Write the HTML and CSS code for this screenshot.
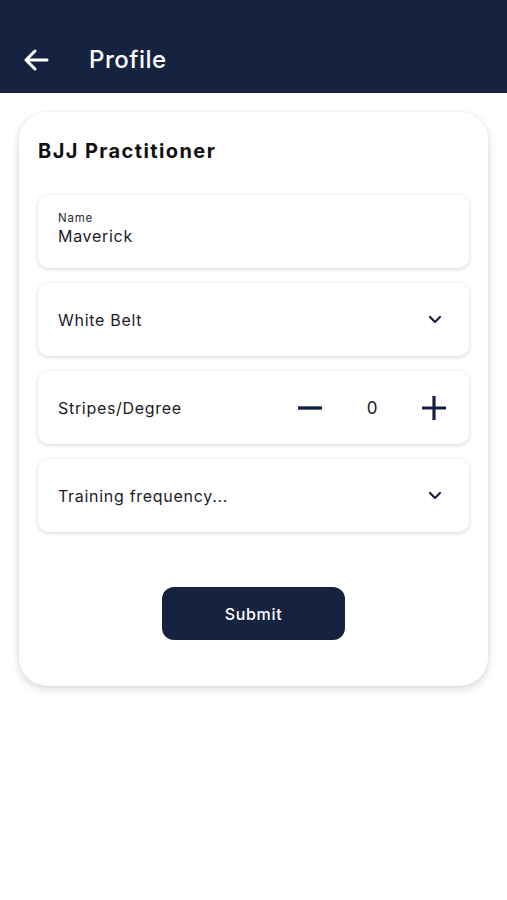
FILE: index.html
```html
<!DOCTYPE html>
<html>
<head>
<meta charset="utf-8">
<link rel="stylesheet" href="styles.css">
</head>
<body>
<header class="appbar">
  <svg class="back" width="28" height="24" viewBox="0 0 28 24"><path d="M25 12H4M13 3L4 12l9 9" fill="none" stroke="#fff" stroke-width="3" stroke-linecap="round" stroke-linejoin="round"/></svg>
  <h1 class="title">Profile</h1>
</header>
<main class="content">
  <section class="card">
    <h2 class="card-title">BJJ Practitioner</h2>
    <div class="fields">
      <div class="field field-name">
        <span class="label">Name</span>
        <span class="value">Maverick</span>
      </div>
      <div class="field field-row">
        <span class="value">White Belt</span>
        <svg class="chev" width="14" height="9" viewBox="0 0 14 9"><path d="M2 2l5 5 5-5" fill="none" stroke="#162340" stroke-width="2.2" stroke-linecap="round" stroke-linejoin="round"/></svg>
      </div>
      <div class="field field-row">
        <span class="value">Stripes/Degree</span>
        <div class="stepper">
          <svg width="26" height="26" viewBox="0 0 26 26"><path d="M1 13h24" stroke="#162340" stroke-width="3.4"/></svg>
          <span class="count">0</span>
          <svg width="26" height="26" viewBox="0 0 26 26"><path d="M1 13h24M13 1v24" stroke="#162340" stroke-width="3.2"/></svg>
        </div>
      </div>
      <div class="field field-row">
        <span class="value">Training frequency...</span>
        <svg class="chev" width="14" height="9" viewBox="0 0 14 9"><path d="M2 2l5 5 5-5" fill="none" stroke="#162340" stroke-width="2.2" stroke-linecap="round" stroke-linejoin="round"/></svg>
      </div>
    </div>
    <div class="actions">
      <button class="submit">Submit</button>
    </div>
  </section>
</main>
</body>
</html>
```
FILE: styles.css
```css
* { box-sizing: border-box; }
html, body { margin: 0; padding: 0; background: #fff; }
body { font-family: "Inter", "Lato", sans-serif; color: #1b1b1f; width: 507px; height: 900px; overflow: hidden; }
.appbar {
  height: 93px;
  background: #162340;
  display: flex;
  align-items: flex-end;
  padding: 0 0 20px 22px;
}
.back { display: block; margin-bottom: 1px; }
.title {
  margin: 0 0 0 39px;
  color: #fff;
  font-size: 24px;
  font-weight: 500;
  line-height: 26px;
  letter-spacing: 0.5px;
}
.content { padding: 19px 19px; }
.card {
  background: #fff;
  border-radius: 28px;
  box-shadow: 0 3px 8px rgba(0,0,0,0.16), 0 0 2px rgba(0,0,0,0.06);
  padding: 26px 19px 45px;
  min-height: 574px;
}
.card-title {
  margin: 0 0 31px;
  font-size: 20px;
  font-weight: 700;
  line-height: 26px;
  letter-spacing: 1.4px;
  color: #111;
}
.fields { display: flex; flex-direction: column; gap: 15px; }
.field {
  height: 73px;
  border-radius: 11px;
  background: #fff;
  box-shadow: 0 1px 4px rgba(0,0,0,0.16);
  padding: 0 20px;
}
.field-name { display: flex; flex-direction: column; justify-content: center; padding-top: 2px; padding-bottom: 6px; }
.label { font-size: 11.5px; line-height: 13px; color: #2a2a35; letter-spacing: 0.8px; }
.value { font-size: 16px; line-height: 22px; color: #1b1b1f; letter-spacing: 0.7px; }
.field-row { display: flex; align-items: center; justify-content: space-between; }
.chev { margin-right: 7px; }
.stepper { display: flex; align-items: center; gap: 0; margin-right: 2px; }
.stepper svg { display: block; }
.count { width: 98px; text-align: center; font-size: 17px; }
.actions { display: flex; justify-content: center; margin-top: 55px; }
.submit {
  width: 183px;
  height: 53px;
  border: none;
  border-radius: 12px;
  background: #162340;
  color: #fff;
  font-family: inherit;
  font-size: 16px;
  font-weight: 500;
  letter-spacing: 0.7px;
}
```
